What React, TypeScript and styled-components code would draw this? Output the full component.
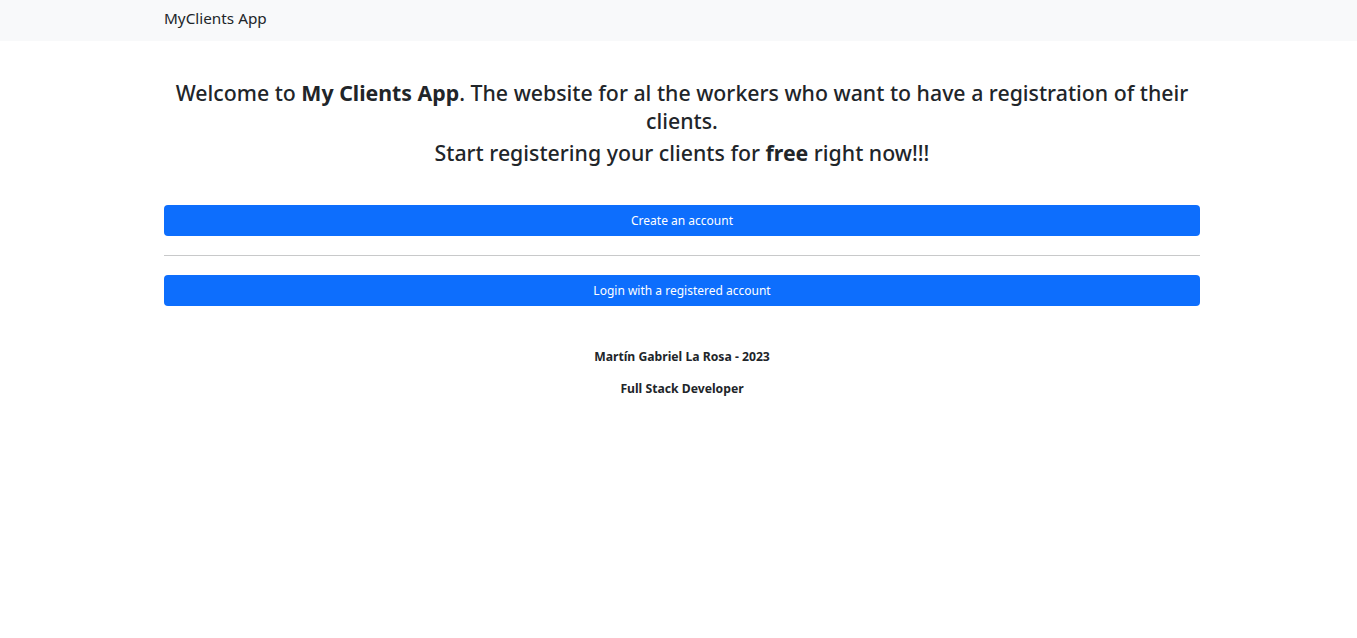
import React from "react";
import styled, { createGlobalStyle } from "styled-components";

const Global = createGlobalStyle`
  html, body { margin: 0; padding: 0; background: #fff; }
  body {
    font-family: "Noto Sans", "Open Sans", sans-serif;
    color: #212529;
  }
  * { box-sizing: border-box; }
`;

const NavBar = styled.nav`
  height: 41px;
  background: #f8f9fa;
  display: flex;
  align-items: center;
`;

const Container = styled.div`
  width: 1036px;
  margin-left: 164px;
`;

const Brand = styled.span`
  font-size: 15.3px;
  color: #212529;
  line-height: 20px;
  position: relative;
  top: -3px;
`;

const Main = styled.main`
  display: flex;
  flex-direction: column;
  padding-top: 38px;
`;

const Heading = styled.h4<{ $gap?: number }>`
  margin: ${(p) => p.$gap ?? 0}px 0 0;
  font-size: 21.3px;
  font-weight: 500;
  line-height: 28px;
  text-align: center;
  b { font-weight: 700; }
`;

const Button = styled.button<{ $top: number }>`
  display: block;
  width: 100%;
  height: 31px;
  margin-top: ${(p) => p.$top}px;
  border: none;
  border-radius: 4px;
  background: #0d6efd;
  color: #fff;
  font-family: inherit;
  font-size: 12px;
  cursor: pointer;
`;

const Rule = styled.hr`
  margin: 19px 0 0;
  border: none;
  border-top: 1px solid #c8c9ca;
`;

const Footer = styled.footer`
  margin-top: 41px;
  display: flex;
  flex-direction: column;
  align-items: center;
  gap: 13px;
`;

const Credit = styled.p`
  margin: 0;
  font-size: 12.2px;
  font-weight: 700;
  line-height: 19px;
`;

export default function App() {
  return (
    <>
      <Global />
      <NavBar>
        <Container>
          <Brand>MyClients App</Brand>
        </Container>
      </NavBar>
      <Container>
        <Main>
          <Heading>
            Welcome to <b>My Clients App</b>. The website for al the workers who want to have a registration of their clients.
          </Heading>
          <Heading $gap={4}>
            Start registering your clients for <b>free</b> right now!!!
          </Heading>
          <Button $top={38}>Create an account</Button>
          <Rule />
          <Button $top={19}>Login with a registered account</Button>
          <Footer>
            <Credit>Martín Gabriel La Rosa - 2023</Credit>
            <Credit>Full Stack Developer</Credit>
          </Footer>
        </Main>
      </Container>
    </>
  );
}
